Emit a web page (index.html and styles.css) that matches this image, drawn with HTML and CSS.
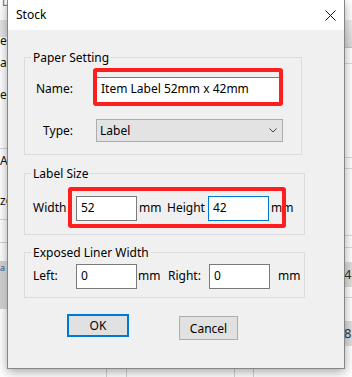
FILE: index.html
```html
<!DOCTYPE html>
<html lang="en">
<head>
    <meta charset="UTF-8">
    <title>Stock</title>
    <link rel="stylesheet" href="styles.css">
</head>
<body>

    <!-- application behind the dialog -->
    <div class="app">
        <div class="pane pane-left">
            <div class="lp-top"><span>D</span></div>
            <div class="lp-head"></div>
            <div class="lp-text lp-t1">er</div>
            <div class="lp-text lp-t2">ap</div>
            <div class="lp-text lp-t3">e</div>
            <div class="lp-line lp-l1"></div>
            <div class="lp-text lp-t4">A</div>
            <div class="lp-text lp-t5">zo</div>
            <div class="lp-line lp-l2"></div>
            <div class="lp-line lp-l3"></div>
            <div class="lp-block"><span>a</span></div>
        </div>
        <div class="pane pane-mid">
            <div class="mid-grid">
                <div class="cell c1"></div>
                <div class="cell c2"></div>
                <div class="cell c3"></div>
                <div class="cell c4"></div>
            </div>
        </div>
        <div class="pane pane-right">
            <div class="rp-top"></div>
            <div class="rp-head"></div>
            <div class="rp-row rp-r1"></div>
            <div class="rp-row rp-r2"></div>
            <div class="rp-row rp-r3"></div>
            <div class="rp-row rp-r4"></div>
            <div class="rp-row rp-r5"></div>
            <div class="rp-gap1"></div>
            <div class="rp-cell rp-c1">4</div>
            <div class="rp-row rp-r6"></div>
            <div class="rp-gap2"></div>
            <div class="rp-cell rp-c2">8</div>
        </div>
    </div>

    <!-- Stock dialog -->
    <div class="dialog">
        <div class="titlebar">
            <span class="title">Stock</span>
            <svg class="close" width="11" height="11" viewBox="0 0 11 11">
                <path d="M0.5 0.5 L10.5 10.5 M10.5 0.5 L0.5 10.5" stroke="#111" stroke-width="1" fill="none"/>
            </svg>
        </div>

        <div class="dialog-body">
            <div class="group group-paper">
                <div class="legend">Paper Setting</div>
                <div class="row row-name">
                    <label class="lbl-right">Name:</label>
                    <input class="text text-name" type="text" value="Item Label 52mm x 42mm">
                </div>
                <div class="row row-type">
                    <label class="lbl-right">Type:</label>
                    <div class="select">
                        <span>Label</span>
                        <svg class="chevron" width="8" height="5" viewBox="0 0 8 5">
                            <path d="M0.5 0.5 L4 4 L7.5 0.5" stroke="#444" stroke-width="1" fill="none"/>
                        </svg>
                    </div>
                </div>
            </div>

            <div class="group group-size">
                <div class="legend">Label Size</div>
                <div class="row row-fields">
                    <label class="lbl lbl-width">Width</label>
                    <input class="text text-small" type="text" value="52">
                    <span class="unit unit-a">mm</span>
                    <label class="lbl lbl-height">Height</label>
                    <input class="text text-small focused" type="text" value="42">
                    <span class="unit unit-b">mm</span>
                </div>
            </div>

            <div class="group group-liner">
                <div class="legend">Exposed Liner Width</div>
                <div class="row row-fields">
                    <label class="lbl lbl-left">Left:</label>
                    <input class="text text-small" type="text" value="0">
                    <span class="unit unit-c">mm</span>
                    <label class="lbl lbl-right-side">Right:</label>
                    <input class="text text-small" type="text" value="0">
                    <span class="unit unit-d">mm</span>
                </div>
            </div>

            <div class="buttons">
                <button class="btn btn-ok">OK</button>
                <button class="btn btn-cancel">Cancel</button>
            </div>
        </div>

        <!-- red annotation boxes -->
        <div class="mark mark-name"></div>
        <div class="mark mark-size"></div>
    </div>

</body>
</html>
```

FILE: styles.css
```css
/* General */
body {
    margin: 0;
    width: 352px;
    height: 377px;
    overflow: hidden;
    position: relative;
    background: #fff;
    font-family: "Noto Sans", sans-serif;
    font-size: 12px;
    color: #000;
}

/* Background application */
.app {
    display: flex;
    height: 377px;
}

.pane {
    display: flex;
    flex-direction: column;
    overflow: hidden;
}

.pane-left {
    width: 7px;
}

.pane-mid {
    flex: 1;
    justify-content: flex-end;
}

.pane-right {
    width: 8px;
}

.lp-top {
    height: 20px;
    font-size: 11px;
    color: #666;
}

.lp-top span {
    display: block;
    line-height: 10px;
    margin-top: -3px;
    padding-left: 2px;
}

.lp-head {
    height: 17px;
    background: #e4e4e4;
}

.lp-text {
    font-size: 12px;
    line-height: 8px;
    white-space: nowrap;
    color: #111;
}

.lp-t1 { height: 20px; }
.lp-t2 { height: 34px; margin-top: 2px; }
.lp-t3 { height: 57px; margin-top: -2px; }

.lp-line {
    height: 0;
    border-top: 1px solid #d6d6d6;
}

.lp-t4 { height: 40px; margin-top: 8px; }
.lp-t5 { height: 22px; margin-top: 0; }

.lp-l2 { margin-top: 0; }
.lp-l3 { margin-top: 22px; }

.lp-block {
    height: 48px;
    margin-top: 18px;
    background: linear-gradient(90deg, #cfcfcf, #e2e2e2);
    font-size: 9px;
    color: #2a5db0;
}

.lp-block span {
    display: block;
    line-height: 10px;
    margin-top: 2px;
}

.mid-grid {
    display: flex;
    height: 8px;
}

.cell {
    box-sizing: border-box;
    border-right: 1px solid #d2d2d2;
}

.c1 { width: 100px; }
.c2 { width: 20px; }
.c3 { width: 108px; }
.c4 { width: 19px; }

.rp-top { height: 20px; }

.rp-head {
    height: 27px;
    background: linear-gradient(180deg, #ececec, #dadada);
    border-bottom: 1px solid #c4c4c4;
}

.rp-row {
    border-bottom: 1px solid #d8d8d8;
}

.rp-r1 { height: 15px; }
.rp-r2 { height: 93px; }
.rp-r3 { height: 10px; }
.rp-r4 { height: 66px; }
.rp-r5 { height: 11px; }

.rp-gap1 { height: 14px; }
.rp-gap2 { height: 23px; }

.rp-cell {
    height: 25px;
    line-height: 25px;
    background: #dedede;
    font-size: 13px;
    color: #333;
}

.rp-r6 { height: 10px; }

/* Dialog window */
.dialog {
    position: absolute;
    left: 7px;
    top: 0;
    width: 338px;
    height: 369px;
    box-sizing: border-box;
    border: 1px solid #868686;
    border-top: none;
    background: #f0f0f0;
    box-shadow: 0 3px 10px rgba(0, 0, 0, 0.35);
}

.titlebar {
    height: 30px;
    background: #fff;
    display: flex;
    align-items: center;
    justify-content: space-between;
    padding-left: 8px;
}

.title {
    line-height: 16px;
}

.close {
    margin-right: 8px;
}

.dialog-body {
    padding-left: 16px;
}

/* Group boxes */
.group {
    box-sizing: border-box;
    border: 1px solid #dcdcdc;
}

.legend {
    width: max-content;
    margin: -8px 0 0 6px;
    padding: 0 2px;
    line-height: 16px;
    background: #f0f0f0;
}

.row {
    display: flex;
    align-items: center;
}

.group-paper {
    width: 278px;
    margin-top: 27px;
    padding-bottom: 12px;
}

.row-name { margin-top: 11px; }
.row-type { margin-top: 16px; }

.lbl-right {
    width: 48px;
    margin-right: 23px;
    text-align: right;
}

.row-name .lbl-right {
    padding-bottom: 4px;
}

.text {
    box-sizing: border-box;
    border: 1px solid #7a7a7a;
    background: #fff;
    font-family: inherit;
    font-size: 12px;
    color: #000;
    padding: 0 4px 3px;
    margin: 0;
    outline: none;
}

.text-name {
    width: 184px;
    height: 26px;
}

.select {
    box-sizing: border-box;
    width: 187px;
    height: 23px;
    border: 1px solid #a9acb1;
    background: #e3e3e3;
    display: flex;
    align-items: center;
    justify-content: space-between;
    padding: 0 5px 0 3px;
}

.group-size {
    width: 281px;
    margin-top: 18px;
    padding-bottom: 13px;
}

.group-size .row-fields { margin-top: 14px; }

.group-liner {
    width: 281px;
    margin-top: 17px;
    padding-bottom: 8px;
}

.group-liner .row-fields { margin-top: 3px; }

.row-fields {
    padding-left: 8px;
}

.lbl,
.unit {
    box-sizing: border-box;
    padding-bottom: 2px;
}

.lbl-width,
.lbl-left { width: 43px; }

.lbl-height { width: 41px; }
.lbl-right-side { width: 41px; }

.text-small {
    width: 61px;
    height: 25px;
}

.text.focused {
    border-color: #0078d7;
}

.unit-a { width: 30px; padding-left: 2px; }
.unit-b { padding-left: 2px; }
.unit-c { width: 31px; padding-left: 1px; }
.unit-d { padding-left: 8px; }

/* Buttons */
.buttons {
    display: flex;
    align-items: flex-start;
    margin-top: 16px;
}

.btn {
    box-sizing: border-box;
    background: #e1e1e1;
    font-family: inherit;
    font-size: 12px;
    color: #000;
    padding: 0;
    margin: 0;
}

.btn-ok {
    width: 62px;
    height: 23px;
    margin-left: 43px;
    border: 2px solid #0078d7;
}

.btn-cancel {
    width: 59px;
    height: 24px;
    margin-left: 50px;
    margin-top: 2px;
    border: 1px solid #adadad;
}

/* Red annotation boxes */
.mark {
    position: absolute;
    box-sizing: border-box;
    border: 4px solid #ff1e1e;
    border-radius: 3px;
}

.mark-name {
    left: 85px;
    top: 68px;
    width: 190px;
    height: 38px;
}

.mark-size {
    left: 60px;
    top: 187px;
    width: 218px;
    height: 41px;
}
```
